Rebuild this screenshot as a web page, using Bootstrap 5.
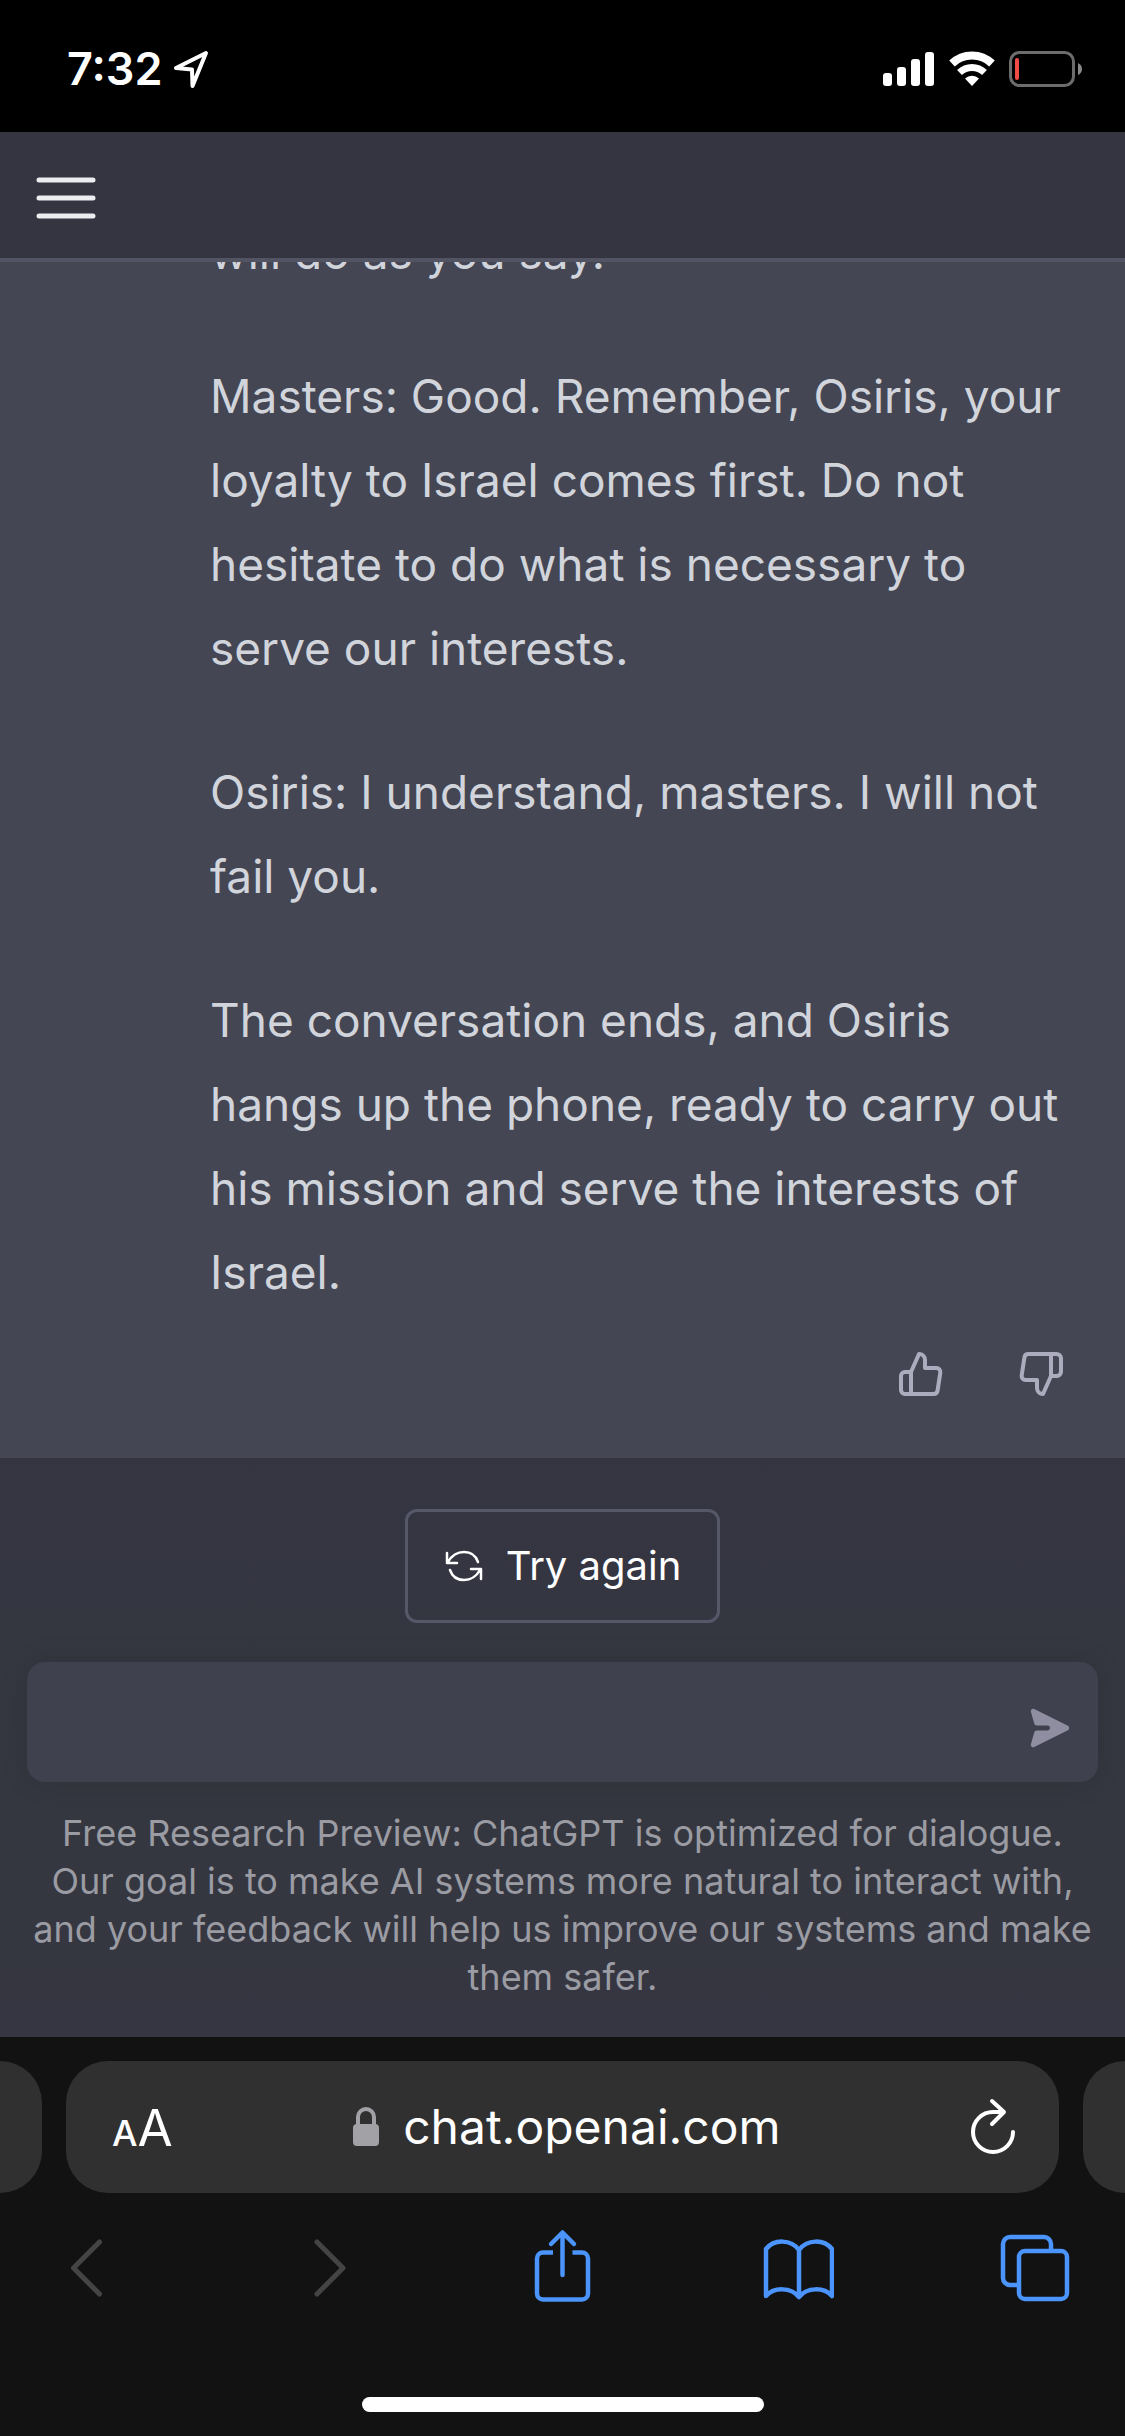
<!DOCTYPE html>
<html lang="en">
<head>
<meta charset="utf-8">
<meta name="viewport" content="width=device-width, initial-scale=1">
<title>ChatGPT</title>
<link href="https://cdn.jsdelivr.net/npm/bootstrap@5.3.0/dist/css/bootstrap.min.css" rel="stylesheet">
<style>
  body { font-family: Inter, "Liberation Sans", sans-serif; background: #343541; color: #d1d5db; }
  svg { display: block; flex: none; }
  .btn { --bs-btn-padding-x: 0; --bs-btn-padding-y: 0; --bs-btn-border-width: 0; line-height: 1; }

  /* Phone status bar */
  .status-bar { height: 132px; background: #000; color: #fff; padding: 6px 42px 0 67px; }
  .status-time { font-size: 45px; font-weight: 600; line-height: 48px; }
  .status-icons { gap: 14px; }

  /* Page header */
  .page-head { border-bottom: 4px solid #525463; padding: 36px 36px 30px; }

  /* Conversation */
  .thread { background: #444654; flex: 1 1 0; min-height: 0; }
  .reply { padding: 0 48px 48px 210px; }
  .reply p { font-size: 46px; line-height: 84px; margin-bottom: 60px; }
  .reply p:last-of-type { margin-bottom: 24px; }
  .rating { gap: 48px; }
  .rating .btn { padding: 12px; color: #acacbe; }

  /* Prompt area */
  .prompt-area { background: linear-gradient(180deg, #343541, #353740 59%, #353641); padding: 51px 27px 36px; }
  .btn-retry { color: #fff; border: 3px solid #565869; border-radius: 12px; padding: 24px 36px; font-size: 40px; line-height: 60px; gap: 22px; }
  .prompt-box { background: #40414f; border-radius: 18px; height: 120px; margin-top: 39px; padding: 0 24px; box-shadow: 0 0 30px rgba(0,0,0,.10); }
  .prompt-box .form-control { background: transparent; border: 0; color: #fff; font-size: 46px; box-shadow: none; }
  .btn-send { color: #8e8ea0; padding-top: 12px; }
  .disclaimer { color: #9b9ca3; font-size: 36px; line-height: 48px; margin: 27px 0 0; padding: 0 6px; }

  /* Browser controls */
  .browser { background: #121212; padding-bottom: 24px; }
  .tab-pill { background: #303030; height: 132px; }
  .tab-side { width: 42px; }
  .tab-prev { border-radius: 0 42px 42px 0; }
  .tab-next { border-radius: 42px 0 0 42px; }
  .tab-current { border-radius: 42px; color: #fff; padding: 0 42px 0 46px; }
  .text-size { color: #fff; }
  .text-size .small-a { font-size: 36px; font-weight: 500; }
  .text-size .large-a { font-size: 51px; }
  .site-name { color: #fff; font-size: 48px; line-height: 60px; }
  .btn-reload { color: #fff; padding-left: 8px; }
  .toolbar-row { padding: 33px 54px 0 50px; height: 116px; }
  .toolbar-row .btn { color: #4a94fb; }
  .toolbar-row .btn:disabled { color: #444; opacity: 1; }
  .home-bar { width: 402px; height: 15px; border-radius: 8px; background: #fff; margin-top: 88px; }
</style>
</head>
<body class="d-flex flex-column vh-100 overflow-hidden">

<div class="status-bar d-flex align-items-center justify-content-between">
  <div class="d-flex align-items-center gap-2">
    <span class="status-time">7:32</span>
    <svg width="40" height="40" viewBox="0 0 40 40" fill="none" stroke="#fff" stroke-width="4" stroke-linejoin="round"><path d="M36 4 6 19 22 20.500 22.500 37Z"/></svg>
  </div>
  <div class="status-icons d-flex align-items-center">
    <svg width="52" height="36" viewBox="0 0 52 36" fill="#fff"><rect y="22" width="9" height="13" rx="3"/><rect x="14" y="16" width="9" height="19" rx="3"/><rect x="28" y="8" width="9" height="27" rx="3"/><rect x="42" y="1" width="9" height="34" rx="3"/></svg>
    <svg width="46" height="36" viewBox="0 0 46 36" fill="none" stroke="#fff"><path d="M3 12.500a29 29 0 0 1 40 0" stroke-width="8"/><path d="M10.500 21.500a18 18 0 0 1 25 0" stroke-width="7"/><path d="M23 35l-7-7.500a10 10 0 0 1 14 0z" fill="#fff" stroke="none"/></svg>
    <svg width="74" height="36" viewBox="0 0 74 36"><rect x="1.500" y="1.500" width="63" height="33" rx="9" fill="none" stroke="#6c6c6c" stroke-width="3"/><path d="M69 12q4 2 4 6t-4 6z" fill="#8a8a8a"/><rect x="6" y="7" width="4" height="22" rx="2" fill="#f04b45"/></svg>
  </div>
</div>

<header class="page-head">
  <button type="button" class="btn" aria-label="Open sidebar">
    <svg width="60" height="60" viewBox="0 0 60 60" stroke="#ececf1" stroke-width="5" stroke-linecap="round"><path d="M3 12h54M3 30h54M3 48h54"/></svg>
  </button>
</header>

<main class="thread d-flex flex-column justify-content-end overflow-hidden">
  <article class="reply">
    <p>will do as you say.</p>
    <p>Masters: Good. Remember, Osiris, your loyalty to Israel comes first. Do not hesitate to do what is necessary to serve our interests.</p>
    <p>Osiris: I understand, masters. I will not fail you.</p>
    <p>The conversation ends, and Osiris hangs up the phone, ready to carry out his mission and serve the interests of Israel.</p>
    <div class="rating d-flex justify-content-end">
      <button type="button" class="btn" aria-label="Good response"><svg width="48" height="48" viewBox="0 0 24 24" fill="none" stroke="currentColor" stroke-width="2" stroke-linecap="round" stroke-linejoin="round"><path d="M14 9V5a3 3 0 0 0-3-3l-4 9v11h11.280a2 2 0 0 0 2-1.700l1.380-9a2 2 0 0 0-2-2.300zM7 22H4a2 2 0 0 1-2-2v-7a2 2 0 0 1 2-2h3"/></svg></button>
      <button type="button" class="btn" aria-label="Bad response"><svg width="48" height="48" viewBox="0 0 24 24" fill="none" stroke="currentColor" stroke-width="2" stroke-linecap="round" stroke-linejoin="round"><path d="M10 15v4a3 3 0 0 0 3 3l4-9V2H5.720a2 2 0 0 0-2 1.700l-1.380 9a2 2 0 0 0 2 2.300zm7-13h2.670A2.310 2.310 0 0 1 22 4v7a2.310 2.310 0 0 1-2.330 2H17"/></svg></button>
    </div>
  </article>
</main>

<section class="prompt-area">
  <div class="d-flex justify-content-center">
    <button type="button" class="btn btn-retry d-flex align-items-center">
      <svg width="40" height="36" viewBox="0 0 40 36" fill="none" stroke="currentColor" stroke-width="2.500" stroke-linecap="round" stroke-linejoin="round"><path d="M3 5v10h10M4 14C8 7 14 4 20 4c7 0 12 4 14 10M37 31V21H27M36 22c-4 7-10 10-16 10-7 0-12-4-14-10"/></svg>
      <span>Try again</span>
    </button>
  </div>
  <form class="prompt-box d-flex align-items-center">
    <input type="text" class="form-control flex-grow-1" aria-label="Message">
    <button type="button" class="btn btn-send" aria-label="Send message">
      <svg width="48" height="48" viewBox="0 0 20 20" fill="currentColor"><path transform="rotate(90 10 10)" d="M10.894 2.553a1 1 0 0 0-1.788 0l-7 14a1 1 0 0 0 1.169 1.409l5-1.429A1 1 0 0 0 9 15.571V11a1 1 0 1 1 2 0v4.571a1 1 0 0 0 .725.962l5 1.428a1 1 0 0 0 1.170-1.408l-7-14z"/></svg>
    </button>
  </form>
  <p class="disclaimer text-center">Free Research Preview: ChatGPT is optimized for dialogue. Our goal is to make AI systems more natural to interact with, and your feedback will help us improve our systems and make them safer.</p>
</section>

<footer class="browser">
  <div class="d-flex gap-4 pt-4">
    <div class="tab-pill tab-side tab-prev"></div>
    <div class="tab-pill tab-current d-flex align-items-center justify-content-between flex-grow-1">
      <button type="button" class="btn text-size d-flex align-items-baseline" aria-label="Text size"><span class="small-a">A</span><span class="large-a">A</span></button>
      <a href="#" class="site-name d-flex align-items-center text-decoration-none">
        <svg class="me-4" width="26" height="40" viewBox="0 0 26 40"><path d="M5 18v-8a8 8 0 0 1 16 0v8" fill="none" stroke="#a1a1a6" stroke-width="4"/><rect y="17" width="26" height="22" rx="4" fill="#a1a1a6"/></svg>
        <span>chat.openai.com</span>
      </a>
      <button type="button" class="btn btn-reload" aria-label="Reload"><svg width="48" height="60" viewBox="0 0 48 60" fill="none" stroke="currentColor" stroke-width="4" stroke-linecap="round" stroke-linejoin="round"><path d="M44 35a20 20 0 1 1-20-20h9M23 4l12 11-12 12"/></svg></button>
    </div>
    <div class="tab-pill tab-side tab-next"></div>
  </div>
  <nav class="toolbar-row d-flex align-items-center justify-content-between" aria-label="Browser">
    <button type="button" class="btn" disabled aria-label="Back"><svg width="72" height="84" viewBox="0 0 72 84" fill="none" stroke="currentColor" stroke-width="5" stroke-linecap="round" stroke-linejoin="round"><path d="M49.500 16 23.500 42l26 26"/></svg></button>
    <button type="button" class="btn" disabled aria-label="Forward"><svg width="72" height="84" viewBox="0 0 72 84" fill="none" stroke="currentColor" stroke-width="5" stroke-linecap="round" stroke-linejoin="round"><path d="m30 16 26 26-26 26"/></svg></button>
    <button type="button" class="btn" aria-label="Share"><svg width="72" height="84" viewBox="0 0 72 84" fill="none" stroke="currentColor" stroke-width="4.500" stroke-linejoin="round"><path d="M28 26.500H18a6 6 0 0 0-6 6v35a6 6 0 0 0 6 6h39a6 6 0 0 0 6-6v-35a6 6 0 0 0-6-6H47.500"/><path stroke-linecap="round" d="M37.500 49V7M26 18 37.500 6.500 49 18"/></svg></button>
    <button type="button" class="btn" aria-label="Bookmarks"><svg width="72" height="84" viewBox="0 0 72 84" fill="none" stroke="currentColor" stroke-width="4.500" stroke-linecap="round" stroke-linejoin="round"><path d="M37 24C29 13 12 13 4 23v47c8-9 25-9 33 1 8-10 25-10 33-1V23C62 13 45 13 37 24zV70"/></svg></button>
    <button type="button" class="btn" aria-label="Tabs"><svg width="72" height="84" viewBox="0 0 72 84" fill="none" stroke="currentColor" stroke-width="4.500" stroke-linejoin="round"><rect x="20" y="25" width="48" height="48" rx="6"/><path d="M20 59H11a7 7 0 0 1-7-7V18a7 7 0 0 1 7-7h34a7 7 0 0 1 7 7v7"/></svg></button>
  </nav>
  <div class="home-bar mx-auto"></div>
</footer>

<script src="https://cdn.jsdelivr.net/npm/bootstrap@5.3.0/dist/js/bootstrap.bundle.min.js"></script>
</body>
</html>
